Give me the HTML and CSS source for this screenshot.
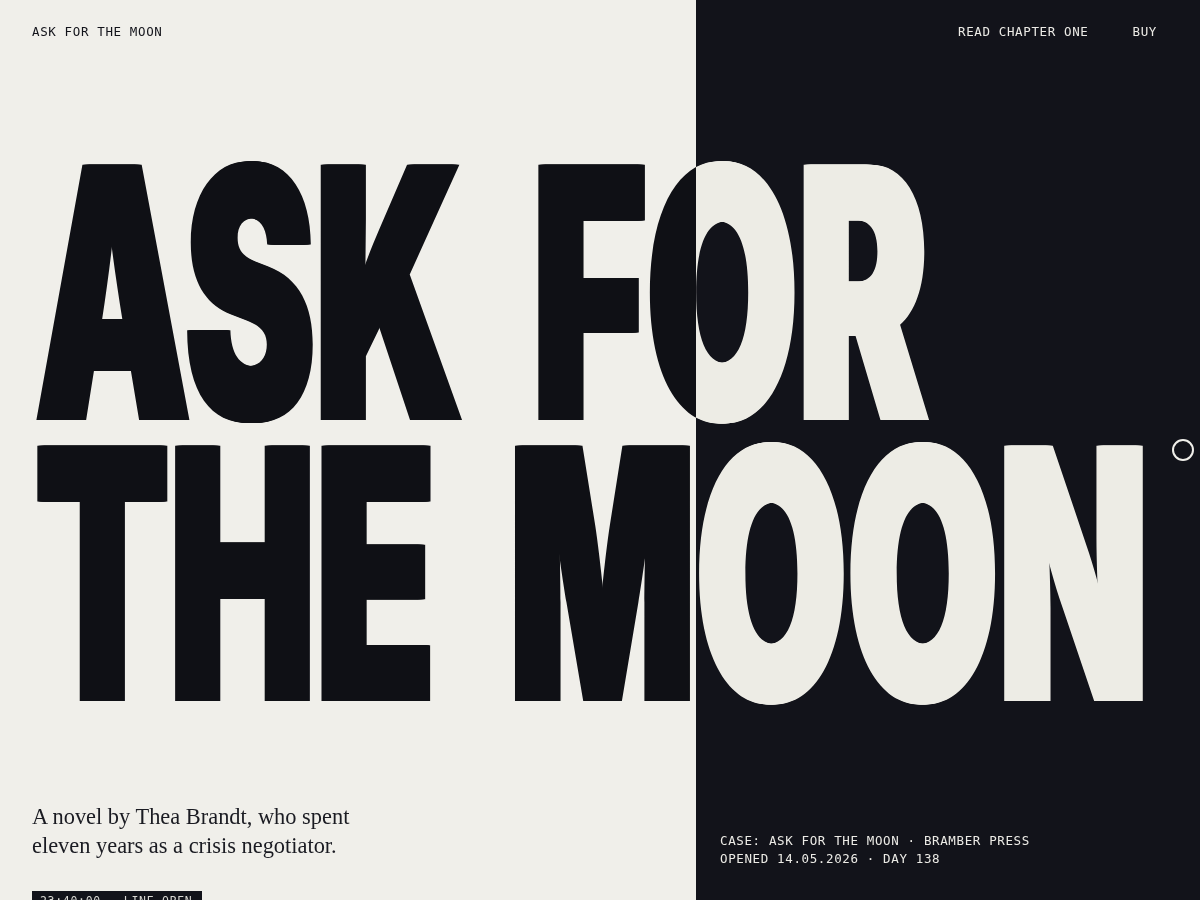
FILE: index.html
```html
<!DOCTYPE html>
<html lang="en">
<head>
<meta charset="utf-8">
<title>Ask for the Moon</title>
<link rel="stylesheet" href="styles.css">
</head>
<body>
<div class="page">
  <header class="top">
    <a class="brand" href="#">ASK FOR THE MOON</a>
    <nav class="links">
      <a href="#">READ CHAPTER ONE</a>
      <a href="#">BUY</a>
    </nav>
  </header>

  <section class="hero">
    <h1 class="title">
      <span class="line"><span class="fit fit-1">ASK FOR</span></span>
      <span class="line"><span class="fit fit-2">THE MOON</span></span>
    </h1>
    <span class="dot"></span>
  </section>

  <footer class="bottom">
    <div class="intro">
      <p class="lede">A novel by Thea Brandt, who spent<br>eleven years as a crisis negotiator.</p>
      <span class="badge">23:40:00 · LINE OPEN</span>
    </div>
    <div class="case">
      <p>CASE: ASK FOR THE MOON · BRAMBER PRESS</p>
      <p>OPENED 14.05.2026 · DAY 138</p>
    </div>
  </footer>
</div>
</body>
</html>
```

FILE: styles.css
```css
html, body {
  margin: 0;
  padding: 0;
  overflow: hidden;
}

body {
  background: #12131a;
}

.page {
  position: relative;
  width: 1200px;
  height: 900px;
  overflow: hidden;
  background: linear-gradient(90deg, #f0efea 0, #f0efea 696px, #12131a 696px, #12131a 100%);
  font-family: "DejaVu Sans Mono", "Liberation Mono", monospace;
}

.top {
  display: grid;
  grid-template-columns: 696px 1fr;
  padding-top: 23px;
  height: 18px;
  font-size: 12.5px;
  line-height: 18px;
  letter-spacing: 0.63px;
}

.top a {
  text-decoration: none;
}

.brand {
  padding-left: 32px;
  color: #12131a;
}

.links {
  display: flex;
  justify-content: flex-end;
  gap: 44px;
  padding-right: 43px;
}

.links a {
  color: #ecebe6;
}

.hero {
  position: relative;
  margin-top: 111px;
}

/* One title: white text in difference mode turns dark over the light
   panel and light over the dark panel. */
.title {
  margin: 0;
  font-family: "Inter", "Roboto", sans-serif;
  font-weight: 900;
  font-size: 351px;
  line-height: 281px;
  letter-spacing: 0;
  color: #ffffff;
  mix-blend-mode: difference;
}

.line {
  display: block;
  white-space: nowrap;
  padding-left: 32px;
}

.fit {
  display: inline-block;
  transform-origin: 0 50%;
  text-shadow: 2px 0 0 currentColor, 4px 0 0 currentColor, 6px 0 0 currentColor,
    8px 0 0 currentColor, 10px 0 0 currentColor, 12px 0 0 currentColor;
}

.fit-1 {
  transform: scaleX(0.556);
  word-spacing: 55px;
}

.fit-2 {
  transform: scaleX(0.556);
  word-spacing: 63px;
}

.dot {
  position: absolute;
  top: 287px;
  right: 6px;
  width: 18px;
  height: 18px;
  border: 2px solid #f0efea;
  border-radius: 50%;
}

.bottom {
  display: grid;
  grid-template-columns: 696px 1fr;
  margin-top: 89px;
}

.intro {
  padding-left: 32px;
}

.lede {
  margin: 0;
  font-family: "Liberation Serif", "DejaVu Serif", serif;
  font-size: 22.4px;
  line-height: 28.5px;
  color: #1a1b22;
}

.badge {
  display: inline-block;
  margin-top: 31px;
  padding: 2px 10px 4px 8px;
  background: #12131a;
  color: #d9d8d3;
  font-size: 11.5px;
  line-height: 16px;
  letter-spacing: 0.7px;
}

.case {
  padding-left: 24px;
  padding-top: 29px;
  color: #ecebe6;
  font-size: 12.5px;
  line-height: 18px;
  letter-spacing: 0.63px;
}

.case p {
  margin: 0;
}
```
